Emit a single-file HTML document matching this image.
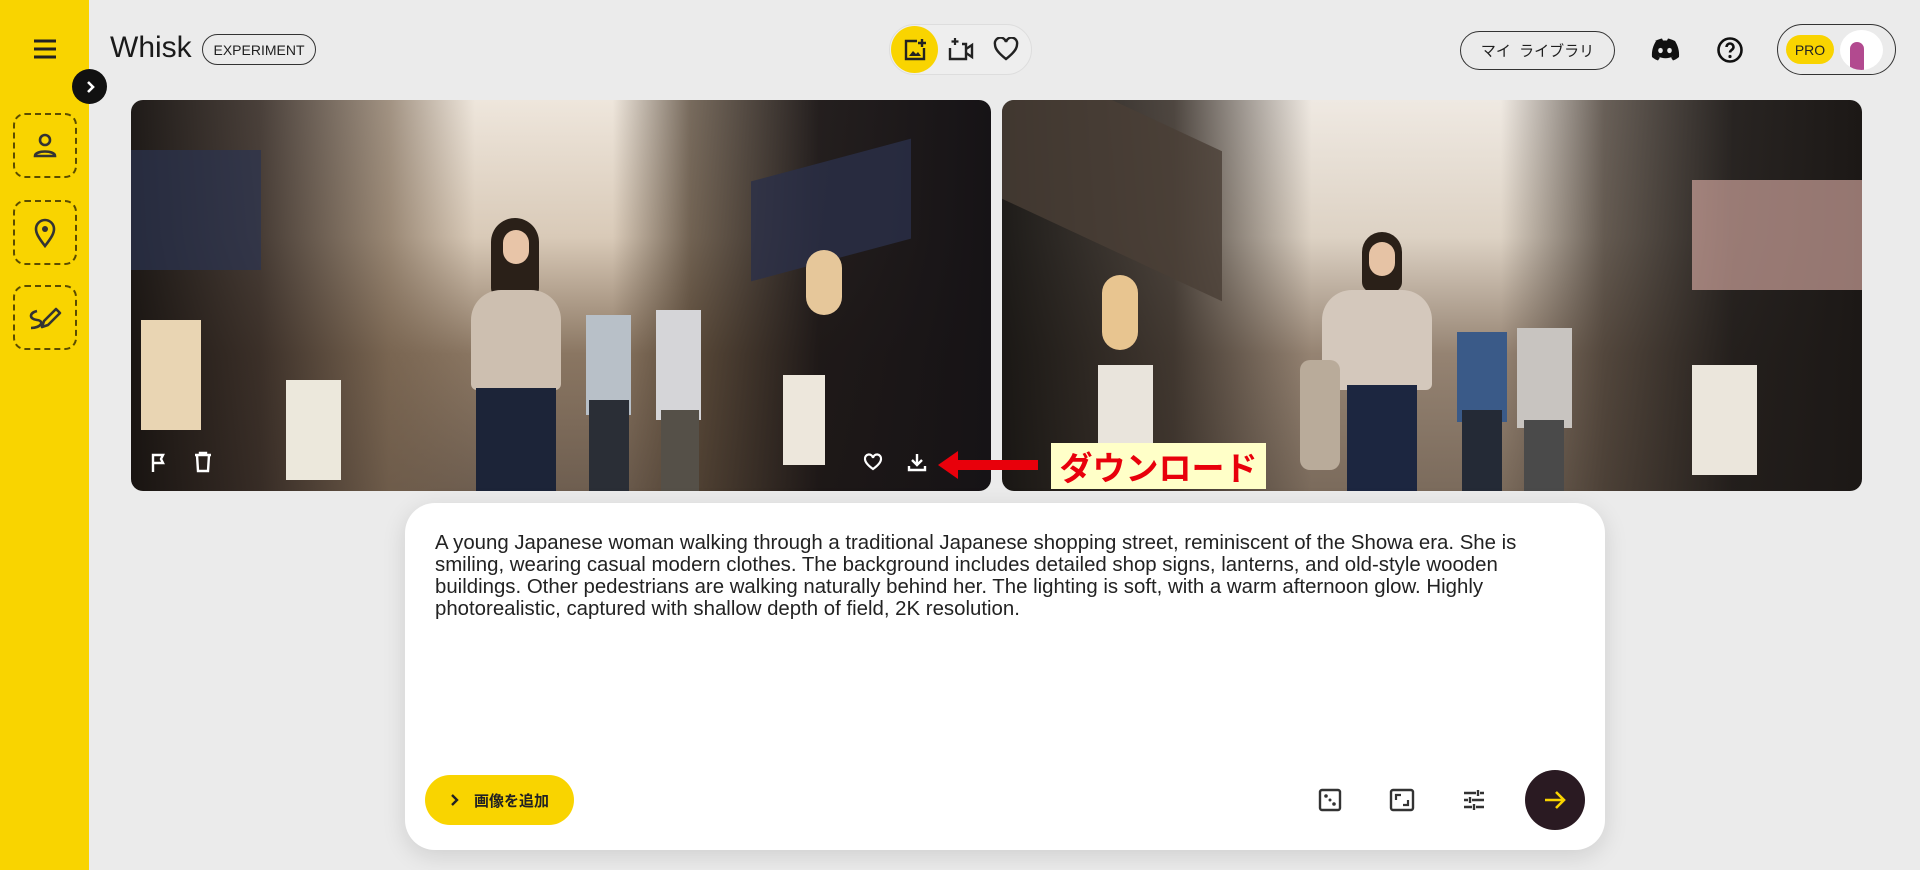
<!DOCTYPE html>
<html><head><meta charset="utf-8"><style>
*{margin:0;padding:0;box-sizing:border-box}
body{width:1920px;height:870px;background:#ebebeb;font-family:"Liberation Sans","Noto Sans CJK JP",sans-serif;position:relative;overflow:hidden;color:#1f1f1f}
.abs{position:absolute}
.side{left:0;top:0;width:89px;height:870px;background:#f9d400}
.dash{left:13px;width:64px;height:65px;border:2px dashed #5a4c00;border-radius:12px;display:flex;align-items:center;justify-content:center}
.img{top:100px;height:391px;width:860px;border-radius:12px;overflow:hidden}
.pill{border:1.5px solid #333;border-radius:30px;display:flex;align-items:center;justify-content:center}
.ic{display:flex;align-items:center;justify-content:center}
</style></head><body>
<div class="abs side"></div>
<svg class="abs" style="left:32px;top:38px" width="26" height="22" viewBox="0 0 26 22"><path d="M2 3h22M2 11h22M2 19h22" stroke="#222" stroke-width="3"/></svg>
<div class="abs ic" style="left:72px;top:69px;width:35px;height:35px;border-radius:50%;background:#111"><svg width="14" height="14" viewBox="0 0 14 14"><path d="M5 2l5 5-5 5" stroke="#fff" stroke-width="2.6" fill="none"/></svg></div>
<div class="abs dash" style="top:113px"><svg width="30" height="30" viewBox="0 0 30 30"><circle cx="15" cy="9" r="5" stroke="#333" stroke-width="2.6" fill="none"/><path d="M5 25c0-6 20-6 20 0z" stroke="#333" stroke-width="2.6" fill="none"/></svg></div>
<div class="abs dash" style="top:200px"><svg width="30" height="32" viewBox="0 0 30 32"><path d="M15 29C8 20 6 16 6 12a9 9 0 0118 0c0 4-2 8-9 17z" stroke="#333" stroke-width="2.6" fill="none"/><circle cx="15" cy="12" r="3" fill="#333"/></svg></div>
<div class="abs dash" style="top:285px"><svg width="36" height="30" viewBox="0 0 36 30"><path d="M10 8c-8 2-8 8 0 9s4 8-6 8" stroke="#333" stroke-width="2.6" fill="none"/><path d="M15 24l2-6 12-12 4 4-12 12z" stroke="#333" stroke-width="2.6" fill="none" stroke-linejoin="round"/></svg></div>
<div class="abs" style="left:110px;top:31px;font-size:30px;color:#1a1a1a">Whisk</div>
<div class="abs pill" style="left:202px;top:34px;width:114px;height:31px;font-size:14px">EXPERIMENT</div>
<div class="abs" style="left:889px;top:24px;width:143px;height:51px;border-radius:26px;border:1.5px solid #ddd;background:#eee"></div>
<div class="abs ic" style="left:891px;top:26px;width:47px;height:47px;border-radius:50%;background:#f9d400"><svg width="26" height="26" viewBox="0 0 26 26"><path d="M15 4H4v18h18V11" stroke="#222" stroke-width="2.4" fill="none"/><path d="M20 2v8M16 6h8" stroke="#222" stroke-width="2.4"/><path d="M7 19l4-5 3 3 2-2 3 4z" fill="#222"/></svg></div>
<svg class="abs" style="left:947px;top:36px" width="28" height="26" viewBox="0 0 28 26"><path d="M8 2v7M4.5 5.5h7" stroke="#222" stroke-width="2.2"/><path d="M3 12v11h16V8h-4" stroke="#222" stroke-width="2.4" fill="none"/><path d="M19 13l6-4v12l-6-4" stroke="#222" stroke-width="2.4" fill="none"/></svg>
<svg class="abs" style="left:993px;top:37px" width="26" height="24" viewBox="0 0 26 24"><path d="M13 22C4 15 2 11 2 7.5A5.5 5.5 0 0113 5a5.5 5.5 0 0111 2.5C24 11 22 15 13 22z" stroke="#222" stroke-width="2.4" fill="none"/></svg>
<div class="abs pill" style="left:1460px;top:31px;width:155px;height:39px;font-size:15px">マイ&nbsp;&nbsp;ライブラリ</div>
<svg class="abs" style="left:1650px;top:38px" width="30" height="23" viewBox="0 0 30 23"><path d="M5 3c4-2 7-2.5 7-2.5l1 2h4l1-2s3 .5 7 2.5c3 5 4.5 10 4 16-3 2.5-6 3.5-6 3.5l-2-3c1-.3 2-1 2-1-5 2.3-10 2.3-15 0 0 0 1 .7 2 1l-2 3s-3-1-6-3.5c-.5-6 1-11 4-16z" fill="#111"/><ellipse cx="10.5" cy="12.5" rx="2.3" ry="2.6" fill="#ebebeb"/><ellipse cx="19.5" cy="12.5" rx="2.3" ry="2.6" fill="#ebebeb"/></svg>
<svg class="abs" style="left:1716px;top:36px" width="28" height="28" viewBox="0 0 28 28"><circle cx="14" cy="14" r="11.5" stroke="#111" stroke-width="2.6" fill="none"/><path d="M10.5 11a3.5 3.5 0 117 0c0 3-3.5 3-3.5 5.5" stroke="#111" stroke-width="2.6" fill="none"/><circle cx="14" cy="20.5" r="1.6" fill="#111"/></svg>
<div class="abs" style="left:1777px;top:24px;width:119px;height:51px;border:1.5px solid #333;border-radius:26px"></div>
<div class="abs ic" style="left:1786px;top:35px;width:48px;height:29px;border-radius:15px;background:#f9d400;font-size:14px;color:#222">PRO</div>
<div class="abs" style="left:1840px;top:30px;width:43px;height:40px;border-radius:50%;background:#fff;overflow:hidden"><div class="abs" style="left:10px;top:12px;width:14px;height:28px;border-radius:7px 7px 0 0;background:#b24a8f"></div></div>

<div class="abs img" style="left:131px;background:
linear-gradient(90deg,rgba(20,16,14,.95) 0%,rgba(45,35,30,.85) 15%,rgba(110,90,70,.6) 30%,rgba(0,0,0,0) 40%,rgba(0,0,0,0) 56%,rgba(70,55,40,.7) 65%,rgba(25,20,20,.95) 80%,#161316 100%),
linear-gradient(180deg,#eee6dc 0%,#d9cab8 35%,#8a7662 65%,#6e5e50 100%)">
<div class="abs" style="left:0;top:50px;width:130px;height:120px;background:#2b3350;opacity:.7"></div>
<div class="abs" style="left:10px;top:220px;width:60px;height:110px;background:#e9d5b3"></div>
<div class="abs" style="left:155px;top:280px;width:55px;height:100px;background:#ece8dc"></div>
<div class="abs" style="left:620px;top:60px;width:160px;height:100px;background:#2a2f48;opacity:.8;transform:skewY(-15deg)"></div>
<div class="abs" style="left:675px;top:150px;width:36px;height:65px;border-radius:18px;background:#e6c79a"></div>
<div class="abs" style="left:652px;top:275px;width:42px;height:90px;background:#ede7dc"></div>
<div class="abs" style="left:360px;top:118px;width:48px;height:80px;border-radius:24px 24px 10px 10px;background:#2a2018"></div>
<div class="abs" style="left:372px;top:130px;width:26px;height:34px;border-radius:13px;background:#e8c5a8"></div>
<div class="abs" style="left:340px;top:190px;width:90px;height:100px;border-radius:30px 30px 6px 6px;background:#cdbfb0"></div>
<div class="abs" style="left:345px;top:288px;width:80px;height:103px;background:#1c2438"></div>
<div class="abs" style="left:455px;top:215px;width:45px;height:100px;background:#b8c0c8"></div>
<div class="abs" style="left:458px;top:300px;width:40px;height:91px;background:#2a2e36"></div>
<div class="abs" style="left:525px;top:210px;width:45px;height:110px;background:#d5d5d8"></div>
<div class="abs" style="left:530px;top:310px;width:38px;height:81px;background:#555048"></div>
</div>
<div class="abs img" style="left:1002px;background:
linear-gradient(90deg,rgba(20,18,16,.95) 0%,rgba(50,42,36,.85) 20%,rgba(0,0,0,0) 36%,rgba(0,0,0,0) 58%,rgba(60,50,42,.75) 70%,rgba(30,26,24,.95) 85%,#1c1816 100%),
linear-gradient(180deg,#efe9e2 0%,#ddd2c4 35%,#958372 65%,#7b6b5c 100%)">
<div class="abs" style="left:0;top:0;width:220px;height:150px;background:#4a3e36;opacity:.8;transform:skewY(25deg)"></div>
<div class="abs" style="left:100px;top:175px;width:36px;height:75px;border-radius:18px;background:#e8c590"></div>
<div class="abs" style="left:96px;top:265px;width:55px;height:120px;background:#e9e4dc"></div>
<div class="abs" style="left:690px;top:80px;width:170px;height:110px;background:#e6b5ae;opacity:.6"></div>
<div class="abs" style="left:690px;top:265px;width:65px;height:110px;background:#ebe6dc"></div>
<div class="abs" style="left:360px;top:132px;width:40px;height:60px;border-radius:20px 20px 10px 10px;background:#2a2018"></div>
<div class="abs" style="left:367px;top:142px;width:26px;height:34px;border-radius:13px;background:#e6c3a5"></div>
<div class="abs" style="left:320px;top:190px;width:110px;height:100px;border-radius:30px 30px 6px 6px;background:#d4c8bc"></div>
<div class="abs" style="left:345px;top:285px;width:70px;height:106px;background:#1c2640"></div>
<div class="abs" style="left:298px;top:260px;width:40px;height:110px;background:#b9ab9a;border-radius:10px"></div>
<div class="abs" style="left:455px;top:232px;width:50px;height:90px;background:#3a5a88"></div>
<div class="abs" style="left:460px;top:310px;width:40px;height:81px;background:#242a36"></div>
<div class="abs" style="left:515px;top:228px;width:55px;height:100px;background:#c8c4c0"></div>
<div class="abs" style="left:522px;top:320px;width:40px;height:71px;background:#4a4a4a"></div>
</div>
<svg class="abs" style="left:149px;top:452px" width="20" height="22" viewBox="0 0 20 22"><path d="M4 20V3h10l-2 4 2 4H4" stroke="#fff" stroke-width="2.4" fill="none"/></svg>
<svg class="abs" style="left:193px;top:451px" width="20" height="22" viewBox="0 0 20 22"><path d="M2 4h16M7 4V2h6v2M4 4l1 16h10l1-16" stroke="#fff" stroke-width="2.4" fill="none"/></svg>
<svg class="abs" style="left:863px;top:453px" width="20" height="18" viewBox="0 0 20 18"><path d="M10 16C3 11 2 8 2 6a4 4 0 018-1 4 4 0 018 1c0 2-1 5-8 10z" stroke="#fff" stroke-width="2.2" fill="none"/></svg>
<svg class="abs" style="left:907px;top:452px" width="20" height="20" viewBox="0 0 20 20"><path d="M10 2v11M5 8l5 5 5-5M2 14v4h16v-4" stroke="#fff" stroke-width="2.4" fill="none"/></svg>
<svg class="abs" style="left:936px;top:449px" width="102" height="32" viewBox="0 0 102 32"><path d="M2 16L22 2v9h80v10H22v9z" fill="#e8000b"/></svg>
<div class="abs ic" style="left:1051px;top:443px;width:215px;height:46px;background:#ffffc8;color:#e8000b;font-weight:bold;font-size:33px;white-space:nowrap;overflow:hidden">ダウンロード</div>

<div class="abs" style="left:405px;top:503px;width:1200px;height:347px;background:#fff;border-radius:30px;box-shadow:0 6px 24px rgba(0,0,0,.12)"></div>
<div class="abs" style="left:435px;top:532px;font-size:20.4px;line-height:22px;color:#222;white-space:nowrap">A young Japanese woman walking through a traditional Japanese shopping street, reminiscent of the Showa era. She is<br>smiling, wearing casual modern clothes. The background includes detailed shop signs, lanterns, and old-style wooden<br>buildings. Other pedestrians are walking naturally behind her. The lighting is soft, with a warm afternoon glow. Highly<br>photorealistic, captured with shallow depth of field, 2K resolution.</div>
<div class="abs ic" style="left:425px;top:775px;width:149px;height:50px;border-radius:25px;background:#f9d400;font-size:15px;font-weight:bold;color:#222;gap:14px"><svg width="10" height="14" viewBox="0 0 10 14"><path d="M2 2l5 5-5 5" stroke="#222" stroke-width="2.4" fill="none"/></svg>画像を追加</div>
<svg class="abs" style="left:1318px;top:788px" width="24" height="24" viewBox="0 0 24 24"><rect x="2" y="2" width="20" height="20" rx="2" stroke="#333" stroke-width="2.4" fill="none"/><circle cx="8" cy="8" r="1.8" fill="#333"/><circle cx="16" cy="16" r="1.8" fill="#333"/><circle cx="12" cy="12" r="1.5" fill="#333"/></svg>
<svg class="abs" style="left:1389px;top:788px" width="26" height="24" viewBox="0 0 26 24"><rect x="2" y="2" width="22" height="20" rx="2" stroke="#333" stroke-width="2.4" fill="none"/><path d="M7 12V7h5M19 12v5h-5" stroke="#333" stroke-width="2.2" fill="none"/></svg>
<svg class="abs" style="left:1462px;top:788px" width="24" height="24" viewBox="0 0 24 24"><path d="M2 5h12M18 5h4M2 12h4M10 12h12M2 19h8M14 19h8M16 2v6M8 9v6M12 16v6" stroke="#333" stroke-width="2.4"/></svg>
<div class="abs ic" style="left:1525px;top:770px;width:60px;height:60px;border-radius:50%;background:#2a1a22"><svg width="26" height="26" viewBox="0 0 26 26"><path d="M3 13h19M14 5l8 8-8 8" stroke="#f9d400" stroke-width="2.6" fill="none"/></svg></div>
</body></html>
